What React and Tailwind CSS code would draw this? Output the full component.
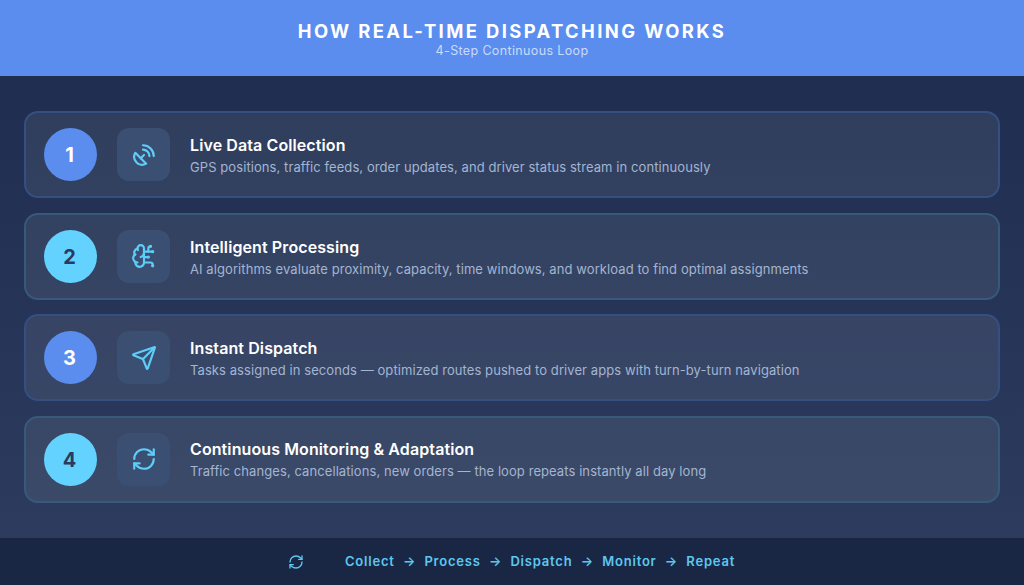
import React from 'react';
import { SatelliteDish, BrainCircuit, Send, RefreshCw } from 'lucide-react';

const STEPS = [
    {
        title: "Live Data Collection",
        text: "GPS positions, traffic feeds, order updates, and driver status stream in continuously",
        icon: SatelliteDish,
    },
    {
        title: "Intelligent Processing",
        text: "AI algorithms evaluate proximity, capacity, time windows, and workload to find optimal assignments",
        icon: BrainCircuit,
    },
    {
        title: "Instant Dispatch",
        text: "Tasks assigned in seconds — optimized routes pushed to driver apps with turn-by-turn navigation",
        icon: Send,
    },
    {
        title: "Continuous Monitoring & Adaptation",
        text: "Traffic changes, cancellations, new orders — the loop repeats instantly all day long",
        icon: RefreshCw,
    },
];

const LOOP = ["Collect", "Process", "Dispatch", "Monitor", "Repeat"];

const App = () => {
    return (
        <div className="w-[1024px] h-[585px] flex flex-col overflow-hidden font-['Inter',sans-serif]">
            <header className="h-[76px] shrink-0 bg-[#5a8dee] pt-[1px] flex flex-col items-center justify-center">
                <h1 className="text-[18.4px] leading-[22px] font-bold tracking-[2.4px] text-white">
                    HOW REAL-TIME DISPATCHING WORKS
                </h1>
                <p className="mt-px text-[12.5px] leading-[15px] tracking-[0.36px] text-[#c9dbfa]">4-Step Continuous Loop</p>
            </header>

            <main className="flex-1 bg-gradient-to-b from-[#1e2d50] to-[#2d3c5e] px-6 flex flex-col justify-center gap-[14.4px]">
                {STEPS.map((step, index) => {
                    const Icon = step.icon;
                    const even = index % 2 === 1;
                    return (
                        <div
                            key={step.title}
                            className={`h-[87px] rounded-[14px] border-2 bg-white/[0.08] px-[18px] flex items-center ${even ? 'border-[#37597c]' : 'border-[#354f80]'}`}
                        >
                            <div
                                className={`w-[53px] h-[53px] rounded-full shrink-0 flex items-center justify-center pt-px pr-[2px] text-[20px] font-bold ${even ? 'bg-[#64d2ff] text-[#2a3a60]' : 'bg-[#5a8dee] text-white'}`}
                            >
                                {index + 1}
                            </div>
                            <div className="w-[53px] h-[53px] ml-5 rounded-xl shrink-0 bg-[#3a4f72] flex items-center justify-center text-[#5fcdf8]">
                                <Icon size={26} strokeWidth={2} />
                            </div>
                            <div className="ml-5 pt-[1.5px]">
                                <h2 className="text-[16px] leading-[20px] tracking-[0.1px] font-semibold text-white">{step.title}</h2>
                                <p className="mt-[3px] text-[13px] leading-[18px] tracking-[0.08px] text-[#a3b5d1]">{step.text}</p>
                            </div>
                        </div>
                    );
                })}
            </main>

            <footer className="h-[47px] shrink-0 bg-[#1a2744] flex items-center justify-center pr-[1px] text-[#5cc8f0] text-[13px] font-semibold tracking-[0.8px]">
                <RefreshCw size={16} strokeWidth={2} className="mr-[41px]" />
                {LOOP.map((label, index) => (
                    <React.Fragment key={label}>
                        {index > 0 && <span className="mx-[8.25px]">→</span>}
                        <span>{label}</span>
                    </React.Fragment>
                ))}
            </footer>
        </div>
    );
};

export default App;
